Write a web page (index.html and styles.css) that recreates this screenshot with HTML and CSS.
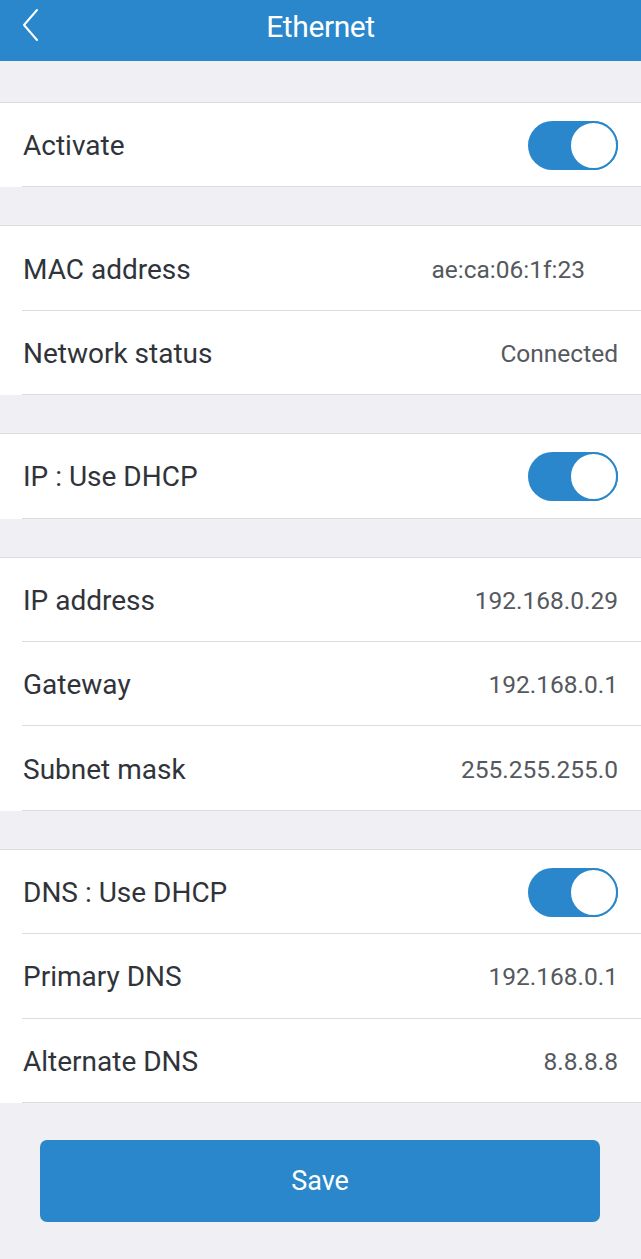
FILE: index.html
```html
<!DOCTYPE html>
<html>
<head>
<meta charset="utf-8">
<link rel="stylesheet" href="styles.css">
</head>
<body>
<header class="topbar">
  <svg class="back" width="20" height="34" viewBox="0 0 20 34"><path d="M15 2 L2 17 L15 32" fill="none" stroke="#fff" stroke-width="2" stroke-linecap="round" stroke-linejoin="round"/></svg>
  <h1 class="title">Ethernet</h1>
</header>

<section class="group first">
  <div class="row"><span class="label">Activate</span><span class="toggle on"><span class="knob"></span></span></div>
</section>

<section class="group">
  <div class="row"><span class="label">MAC address</span><span class="value mac">ae:ca:06:1f:23</span></div>
  <div class="row"><span class="label">Network status</span><span class="value">Connected</span></div>
</section>

<section class="group">
  <div class="row"><span class="label">IP : Use DHCP</span><span class="toggle on"><span class="knob"></span></span></div>
</section>

<section class="group">
  <div class="row"><span class="label">IP address</span><span class="value">192.168.0.29</span></div>
  <div class="row"><span class="label">Gateway</span><span class="value">192.168.0.1</span></div>
  <div class="row"><span class="label">Subnet mask</span><span class="value">255.255.255.0</span></div>
</section>

<section class="group">
  <div class="row"><span class="label">DNS : Use DHCP</span><span class="toggle on"><span class="knob"></span></span></div>
  <div class="row"><span class="label">Primary DNS</span><span class="value">192.168.0.1</span></div>
  <div class="row"><span class="label">Alternate DNS</span><span class="value">8.8.8.8</span></div>
</section>

<div class="actions">
  <button class="save">Save</button>
</div>
</body>
</html>
```
FILE: styles.css
```css
* { box-sizing: border-box; }
html, body { margin: 0; padding: 0; }
body {
  background: #efeff4;
  font-family: Roboto, "Noto Sans", sans-serif;
  width: 641px;
  min-height: 1259px;
}
.topbar {
  height: 61px;
  background: #2a87cb;
  display: flex;
  align-items: center;
  justify-content: center;
  padding-bottom: 8px;
  position: relative;
}
.back {
  position: absolute;
  left: 22px;
  top: 8px;
}
.title {
  margin: 0;
  color: #fff;
  font-weight: 400;
  font-size: 30px;
  letter-spacing: -0.4px;
}
.group {
  background: #fff;
  margin-top: 38px;
  border-top: 1px solid #dcdce0;
}
.group.first { margin-top: 41px; }
.row {
  height: 84.4px;
  margin-left: 22px;
  padding-right: 23px;
  padding-top: 2px;
  border-bottom: 1px solid #dcdce0;
  display: flex;
  align-items: center;
  justify-content: space-between;
}
.label {
  font-size: 28px;
  color: #30343a;
  margin-left: 1px;
}
.value {
  font-size: 24.5px;
  color: #55595e;
}
.value.mac { margin-right: 33px; }
.toggle {
  width: 90px;
  height: 49px;
  border-radius: 25px;
  background: #2a87cb;
  position: relative;
  display: block;
}
.knob {
  position: absolute;
  right: 0;
  top: 0;
  width: 49px;
  height: 49px;
  border-radius: 50%;
  background: #fff;
  border: 2px solid #2a87cb;
}
.actions {
  padding: 37px 41px 0 40px;
}
.save {
  width: 560px;
  height: 82px;
  border: none;
  border-radius: 7px;
  background: #2a87cb;
  color: #fff;
  font-family: Roboto, "Noto Sans", sans-serif;
  font-size: 27px;
  display: block;
}
```
